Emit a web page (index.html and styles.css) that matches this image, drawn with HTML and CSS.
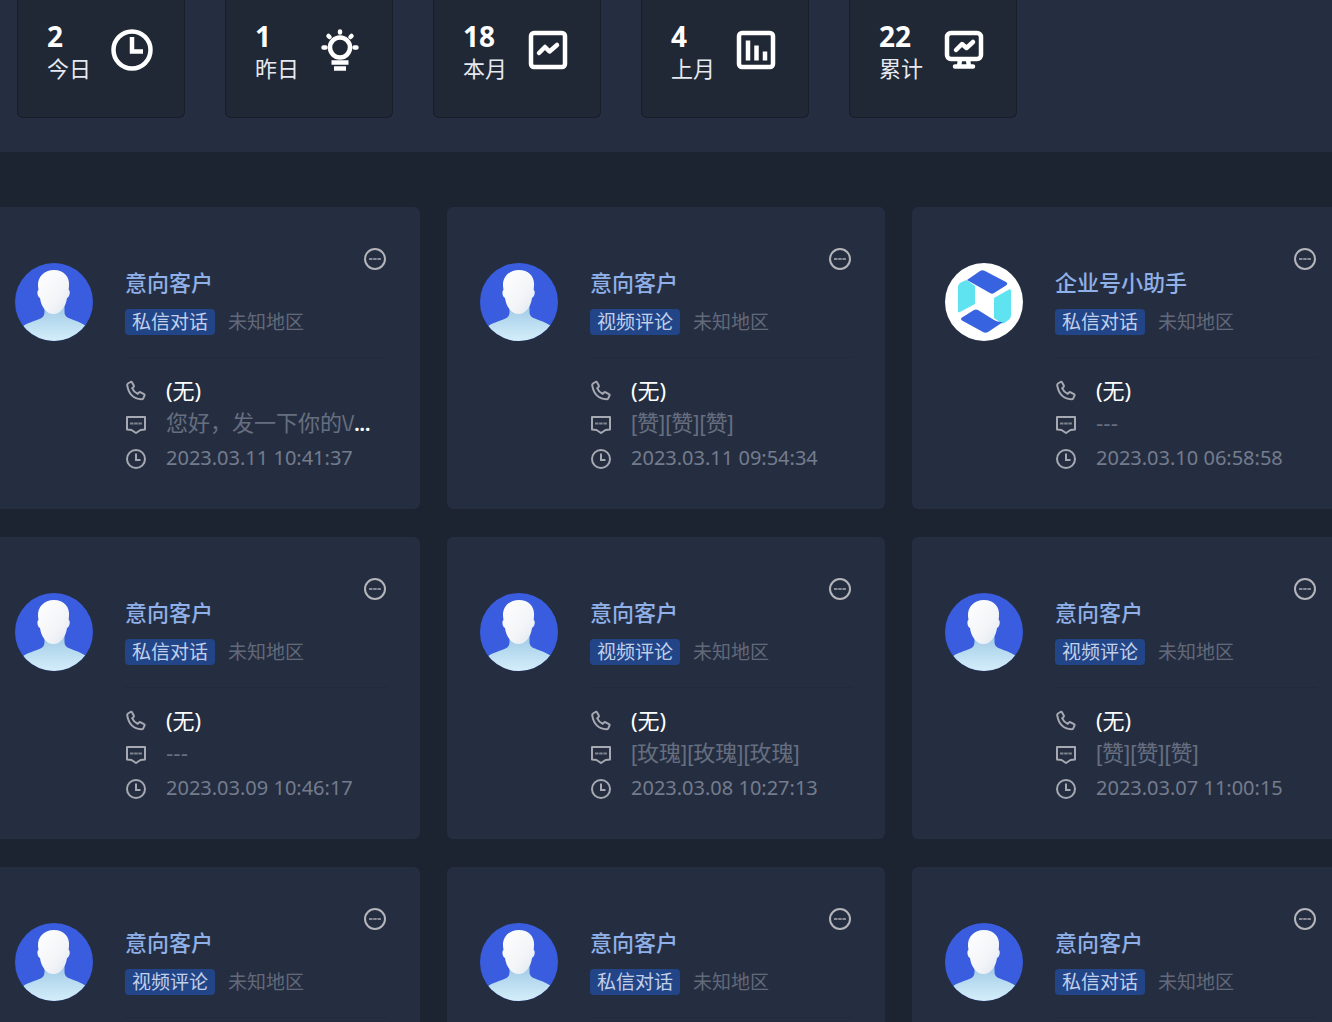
FILE: index.html
```html
<!DOCTYPE html>
<html lang="zh-CN">
<head>
    <meta charset="UTF-8">
    <meta name="viewport" content="width=device-width, initial-scale=1.0">
    <title>客户线索</title>
    <link rel="stylesheet" href="styles.css">
</head>
<body>
<svg class="sprite" aria-hidden="true">
    <defs>
        <linearGradient id="headFill" x1="0" y1="0" x2="1" y2="1">
            <stop offset="0" stop-color="#ffffff"/>
            <stop offset="0.6" stop-color="#f4f5f8"/>
            <stop offset="1" stop-color="#dfe7f0"/>
        </linearGradient>
        <linearGradient id="bodyFill" x1="0" y1="0" x2="0" y2="1">
            <stop offset="0" stop-color="#9cc6e2"/>
            <stop offset="0.5" stop-color="#b9dcf0"/>
            <stop offset="1" stop-color="#d6effa"/>
        </linearGradient>
        <clipPath id="round"><circle cx="39" cy="39" r="39"/></clipPath>
    </defs>
    <symbol id="user" viewBox="0 0 78 78">
        <g clip-path="url(#round)">
            <rect width="78" height="78" fill="#3a5de0"/>
            <path d="M29.500 40h20v9c0 5 4 6 9 8 6 2 10 4 14 7v15H6V65c4-4 8-5 13-7 6-2 10.500-3 10.500-9z" fill="url(#bodyFill)"/>
            <path d="M39 7c10 0 16 7 15 16l-.3 4c2 1 1 7-1.700 8-1 8-6 16-13.500 16S26 43 25 35C22.500 34 21.500 28 23.500 27l-.5-4C22.500 14 29 7 39 7z" fill="url(#headFill)"/>
        </g>
    </symbol>
    <symbol id="helper" viewBox="0 0 78 78">
        <circle cx="39" cy="39" r="39" fill="#fff"/>
        <path d="M13 24q0-3 3-4.500l4-2q2-1 4 1l6 4.500v18L15 49q-2 1-2-1z" fill="#5fe3f0"/>
        <path d="M66 28q0-2.500-2-1.500L49 35v20l7 5q2 1 4-.5l4-3q2-1.500 2-4z" fill="#5fe3f0"/>
        <path d="M22 17l13-9q2.500-1.500 5 0l21 11q2.500 1.500 0 3.500L49 30q-2 1.500-4 0z" fill="#3863e0"/>
        <path d="M17 54.500l12-7.500q2-1 4 0l16 10q4 2.500 9 2L43 69q-2.500 1.500-5 0L17 57.500q-2-1.500 0-3z" fill="#3863e0"/>
    </symbol>
    <symbol id="more" viewBox="0 0 24 24">
        <circle cx="12" cy="12" r="10" fill="none" stroke="currentColor" stroke-width="2"/>
        <path d="M6 12h12" fill="none" stroke="currentColor" stroke-width="2" stroke-dasharray="3.500 0.700" opacity="0.7"/>
    </symbol>
    <symbol id="phone" viewBox="0 0 22 22">
        <path d="M3 3.500l2.500-1.500q1-.5 1.600.5l1.700 3q.5 1-.4 1.700l-1.300 1q1.700 4 5.600 5.700l1.200-1.300q.8-.8 1.700-.3l3.400 1.800q1 .5.500 1.500l-1.200 2.600q-.5 1-2 1.100Q4.500 18.500 2.200 5.400 2 4.200 3 3.500z" fill="none" stroke="currentColor" stroke-width="2" stroke-linejoin="round"/>
    </symbol>
    <symbol id="message" viewBox="0 0 22 22">
        <path d="M2 3h18v12.500l-4.500.5L11 19l-4.500-3-4.500-.5z" fill="none" stroke="currentColor" stroke-width="2" stroke-linejoin="round"/>
        <path d="M5 9.500h12" fill="none" stroke="currentColor" stroke-width="2" stroke-dasharray="3.500 0.700" opacity="0.7"/>
    </symbol>
    <symbol id="clock" viewBox="0 0 22 22">
        <circle cx="11" cy="11" r="9" fill="none" stroke="currentColor" stroke-width="2"/>
        <path d="M11 5.500V12h4.500" fill="none" stroke="currentColor" stroke-width="2"/>
    </symbol>
</svg>

<header class="stats">
    <div class="stat">
        <div>
            <div class="stat-number">2</div>
            <div class="stat-label">今日</div>
        </div>
        <svg class="stat-icon" viewBox="0 0 44 44">
            <circle cx="22" cy="22" r="18.500"/>
            <path d="M22 9v14.500h11"/>
        </svg>
    </div>
    <div class="stat">
        <div>
            <div class="stat-number">1</div>
            <div class="stat-label">昨日</div>
        </div>
        <svg class="stat-icon" viewBox="0 0 44 44">
            <circle cx="22" cy="19.500" r="10"/>
            <path class="round" d="M22 3.500v1M10.500 8l1 1M33.500 8l-1 1M5.500 19.500h2M36.500 19.500h2"/>
            <path d="M13.500 34.500h17M16 40.500h12"/>
        </svg>
    </div>
    <div class="stat">
        <div>
            <div class="stat-number">18</div>
            <div class="stat-label">本月</div>
        </div>
        <svg class="stat-icon" viewBox="0 0 44 44">
            <rect x="5" y="5" width="34" height="34" rx="3"/>
            <path class="round" d="M13 25l6-6 4.500 4.500L31 17"/>
        </svg>
    </div>
    <div class="stat">
        <div>
            <div class="stat-number">4</div>
            <div class="stat-label">上月</div>
        </div>
        <svg class="stat-icon" viewBox="0 0 44 44">
            <rect x="5" y="5" width="34" height="34" rx="3"/>
            <path d="M14 12.500v20M22.500 17.500v15M31 23.500v9"/>
        </svg>
    </div>
    <div class="stat">
        <div>
            <div class="stat-number">22</div>
            <div class="stat-label">累计</div>
        </div>
        <svg class="stat-icon" viewBox="0 0 44 44">
            <rect x="5" y="5" width="34" height="26" rx="4"/>
            <path class="round" d="M14 22l6-6 4.500 4L31 14"/>
            <path class="round" d="M18 32l-1 6M26 32l1 6M13 38.500h18"/>
        </svg>
    </div>
</header>

<main class="customers" id="customers"></main>

<script>
    const customers = [
        { tag: '私信对话', message: '您好，发一下你的\\/', cut: true, time: '2023.03.11 10:41:37' },
        { tag: '视频评论', message: '[赞][赞][赞]', time: '2023.03.11 09:54:34' },
        { name: '企业号小助手', avatar: 'helper', tag: '私信对话', message: '---', time: '2023.03.10 06:58:58' },
        { tag: '私信对话', message: '---', time: '2023.03.09 10:46:17' },
        { tag: '视频评论', message: '[玫瑰][玫瑰][玫瑰]', time: '2023.03.08 10:27:13' },
        { tag: '视频评论', message: '[赞][赞][赞]', time: '2023.03.07 11:00:15' },
        { tag: '视频评论' },
        { tag: '私信对话' },
        { tag: '私信对话' }
    ];

    const list = document.getElementById('customers');

    function renderDetails(customer) {
        if (!customer.time) return '';
        return `
            <ul class="details">
                <li><svg class="icon"><use href="#phone"/></svg><span>(无)</span></li>
                <li><svg class="icon"><use href="#message"/></svg><span class="message">${customer.message}</span>${customer.cut ? '<span class="dots">...</span>' : ''}</li>
                <li><svg class="icon"><use href="#clock"/></svg><span class="time">${customer.time}</span></li>
            </ul>
        `;
    }

    customers.forEach(customer => {
        const card = document.createElement('article');
        card.className = 'card';
        card.innerHTML = `
            <svg class="avatar"><use href="#${customer.avatar || 'user'}"/></svg>
            <div class="card-body">
                <div class="card-head">
                    <div class="card-title">
                        <h2 class="name">${customer.name || '意向客户'}</h2>
                        <div class="meta">
                            <span class="tag">${customer.tag}</span>
                            <span class="region">未知地区</span>
                        </div>
                    </div>
                    <button type="button" class="more" aria-label="更多"><svg><use href="#more"/></svg></button>
                </div>
                ${renderDetails(customer)}
            </div>
        `;
        list.appendChild(card);
    });
</script>
</body>
</html>
```
FILE: styles.css
```css
* {
    box-sizing: border-box;
}
body {
    margin: 0;
    background-color: #1c2331;
    color: #fff;
    font-family: "Noto Sans", "Noto Sans CJK SC", sans-serif;
    overflow-x: hidden;
}
.sprite {
    position: absolute;
    width: 0;
    height: 0;
}

/* stats */
.stats {
    display: flex;
    gap: 40px;
    padding: 0 17px 34px;
    background-color: #252e41;
}
.stat {
    display: flex;
    align-items: flex-start;
    gap: 19px;
    width: 168px;
    padding: 20px 0 33px 29px;
    background-color: #202735;
    border: 1px solid #181e2a;
    border-top: none;
    border-radius: 0 0 6px 6px;
}
.stat-number {
    font-size: 28px;
    font-weight: 700;
    line-height: 32px;
}
.stat-label {
    font-size: 22px;
    line-height: 32px;
    color: #e6e9f0;
}
.stat-icon {
    width: 44px;
    height: 44px;
    margin-top: 8px;
    fill: none;
    stroke: #fff;
    stroke-width: 4.5;
}
.stat-icon .round {
    stroke-linecap: round;
    stroke-linejoin: round;
}

/* customer cards */
.customers {
    display: grid;
    grid-template-columns: repeat(3, 1fr);
    gap: 28px 27px;
    margin: 55px -18px 0;
}
.card {
    display: flex;
    align-items: flex-start;
    gap: 32px;
    padding: 40px 33px 33px;
    background-color: #252e41;
    border-radius: 6px;
}
.avatar {
    flex: none;
    width: 78px;
    height: 78px;
    margin-top: 16px;
}
.card-body {
    flex: 1;
    min-width: 0;
}
.card-head {
    display: flex;
    justify-content: space-between;
    align-items: flex-start;
    padding-bottom: 22px;
    border-bottom: 1px solid #21293a;
}
.card-title {
    padding-top: 20px;
}
.name {
    margin: 0 0 12px;
    font-size: 22px;
    font-weight: 500;
    line-height: 30px;
    color: #8fb0e8;
}
.meta {
    display: flex;
    gap: 13px;
    font-size: 19px;
    line-height: 26px;
}
.tag {
    padding: 0 7px;
    background-color: #224587;
    border-radius: 4px;
    color: #c3d0ea;
}
.region {
    color: #626979;
}
.more {
    width: 24px;
    height: 24px;
    padding: 0;
    border: none;
    background: none;
    color: #b4b4ba;
    cursor: pointer;
}
.more svg {
    display: block;
    width: 24px;
    height: 24px;
}
.details {
    margin: 0;
    padding: 16px 0 0;
    list-style: none;
}
.details li {
    display: flex;
    align-items: center;
    height: 34px;
    font-size: 22px;
    line-height: 30px;
    white-space: nowrap;
}
.details span {
    padding-bottom: 2px;
}
.icon {
    width: 22px;
    height: 22px;
    margin-right: 19px;
    color: #a6a9b1;
}
.message {
    font-family: "Liberation Sans", "Noto Sans CJK SC", sans-serif;
    color: #666e80;
}
.dots {
    font-weight: 700;
    font-size: 19px;
}
.time {
    font-size: 20px;
    color: #747c8d;
}
```
